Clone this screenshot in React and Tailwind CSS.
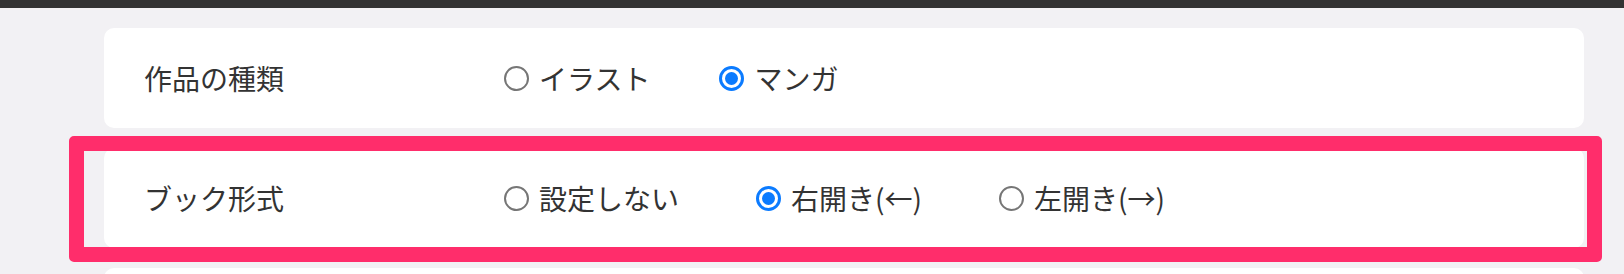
import React from "react";

function Radio({ checked, label }) {
  return (
    <label className="flex items-center gap-[10px]">
      {checked ? (
        <span className="flex h-[25px] w-[25px] items-center justify-center rounded-full border-[3px] border-[#0b7bff] bg-white">
          <span className="h-[13px] w-[13px] rounded-full bg-[#0b7bff]" />
        </span>
      ) : (
        <span className="h-[25px] w-[25px] rounded-full border-2 border-[#767676] bg-white" />
      )}
      <span>{label}</span>
    </label>
  );
}

function Row({ title, options, selected, gapClass }) {
  return (
    <div className="flex h-[100px] items-center rounded-[10px] bg-white">
      <div className="w-[400px] pl-10">{title}</div>
      <div className={"flex items-center " + gapClass}>
        {options.map((o) => (
          <Radio key={o} label={o} checked={o === selected} />
        ))}
      </div>
    </div>
  );
}

export default function App() {
  return (
    <div
      className="relative h-[274px] w-[1624px] overflow-hidden bg-[#f2f1f4] text-[28px] leading-none text-[#333333]"
      style={{ fontFamily: '"Noto Sans CJK JP", "Noto Sans", sans-serif' }}
    >
      <div className="h-2 bg-[#333333]" />
      <div className="flex flex-col gap-5 pl-[104px] pr-10 pt-5">
        <Row
          title="作品の種類"
          options={["イラスト", "マンガ"]}
          selected="マンガ"
          gapClass="gap-[69px]"
        />
        <Row
          title="ブック形式"
          options={["設定しない", "右開き(←)", "左開き(→)"]}
          selected="右開き(←)"
          gapClass="gap-[77px]"
        />
        <div className="h-[100px] rounded-[10px] bg-white" />
      </div>
      <div className="pointer-events-none absolute left-[69px] top-[136px] h-[126px] w-[1533px] rounded-[5px] border-[15px] border-[#ff2d6b]" />
    </div>
  );
}
